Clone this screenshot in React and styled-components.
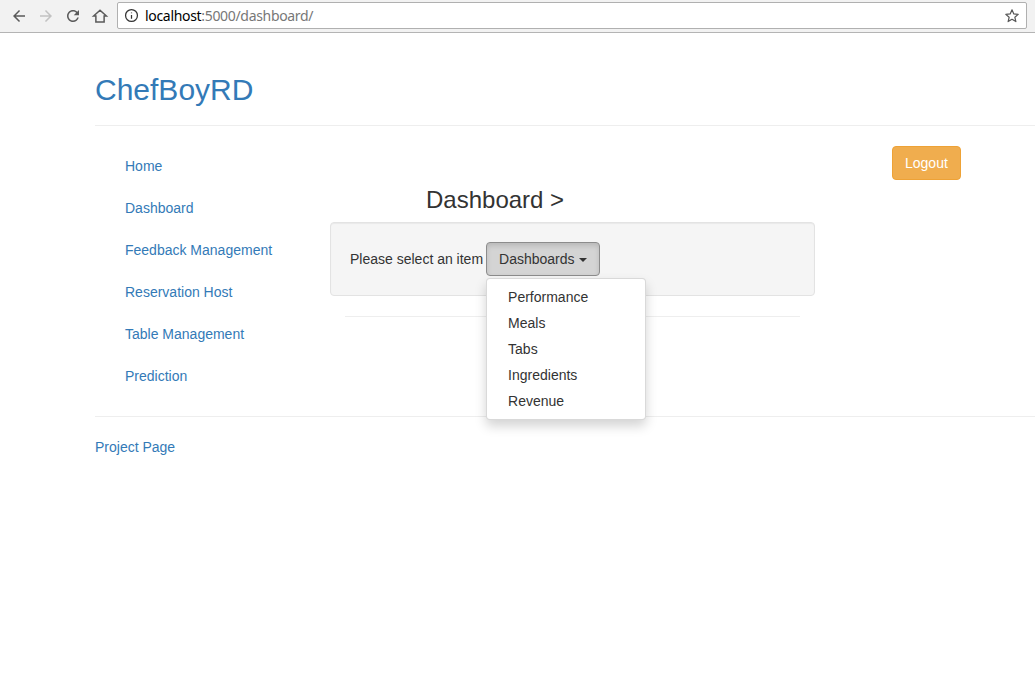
import React from 'react';
import styled, { createGlobalStyle } from 'styled-components';

const Global = createGlobalStyle`
  html, body {
    margin: 0;
    padding: 0;
    background: #fff;
  }
  body {
    font-family: "Liberation Sans", Arial, sans-serif;
    font-size: 14px;
    line-height: 20px;
    color: #333;
  }
  * { box-sizing: border-box; }
`;

/* browser chrome */
const Toolbar = styled.div`
  height: 33px;
  background: #f2f2f2;
  border-bottom: 1px solid #b4b4b4;
  display: flex;
  align-items: center;
  padding: 0 8px 1px 5px;
`;

const NavIcon = styled.span`
  width: 27px;
  height: 28px;
  display: flex;
  align-items: center;
  justify-content: center;
  color: ${p => (p.$dim ? '#c2c2c2' : '#5a5a5a')};
`;

const Omnibox = styled.div`
  flex: 1;
  height: 27px;
  margin-left: 4px;
  background: #fff;
  border: 1px solid #b0b0b0;
  border-radius: 2px;
  display: flex;
  align-items: center;
  padding: 0 6px;
  font-family: "Noto Sans", "DejaVu Sans", sans-serif;
  font-size: 14px;
`;

const Url = styled.span`
  flex: 1;
  margin-left: 6px;
  color: #000;
  letter-spacing: -0.32px;
  span { color: #777; }
`;

/* page */
const Page = styled.div`
  padding-left: 95px;
`;

const Brand = styled.h2`
  margin: 40px 0 0;
  padding-bottom: 19px;
  font-size: 30px;
  line-height: 33px;
  font-weight: 400;
  color: #337ab7;
  border-bottom: 1px solid #eee;
`;

const Row = styled.div`
  display: flex;
  align-items: flex-start;
  padding-top: 19px;
  padding-bottom: 19px;
  border-bottom: 1px solid #eee;
`;

const Sidebar = styled.ul`
  list-style: none;
  margin: 0;
  padding: 0 0 0 30px;
  width: 235px;
  a {
    display: block;
    padding: 11px 0;
    color: #337ab7;
    text-decoration: none;
  }
`;

const Content = styled.div`
  width: 485px;
`;

const Title = styled.h3`
  margin: 42px 0 9px 96px;
  font-size: 24px;
  line-height: 26px;
  font-weight: 400;
`;

const Well = styled.div`
  background: #f5f5f5;
  border: 1px solid #e3e3e3;
  border-radius: 4px;
  padding: 19px;
  box-shadow: inset 0 1px 1px rgba(0, 0, 0, 0.05);
  display: flex;
  align-items: center;
`;

const Dropdown = styled.div`
  position: relative;
  margin-left: 3px;
`;

const Button = styled.button`
  font-family: inherit;
  font-size: 14px;
  line-height: 20px;
  padding: 6px 12px;
  border-radius: 4px;
  border: 1px solid ${p => (p.$warning ? '#eea236' : '#8c8c8c')};
  background: ${p => (p.$warning ? '#f0ad4e' : '#d4d4d4')};
  color: ${p => (p.$warning ? '#fff' : '#333')};
  box-shadow: ${p => (p.$warning ? 'none' : 'inset 0 3px 5px rgba(0,0,0,.125)')};
  display: flex;
  align-items: center;
`;

const Caret = styled.span`
  width: 0;
  height: 0;
  margin-left: 4px;
  margin-top: 1px;
  border-top: 4px solid #333;
  border-left: 4px solid transparent;
  border-right: 4px solid transparent;
`;

const Menu = styled.ul`
  position: absolute;
  top: 100%;
  left: 0;
  margin: 2px 0 0;
  padding: 5px 0;
  min-width: 160px;
  list-style: none;
  background: #fff;
  border: 1px solid rgba(0, 0, 0, 0.15);
  border-radius: 4px;
  box-shadow: 0 6px 12px rgba(0, 0, 0, 0.175);
  z-index: 10;
  li {
    padding: 3px 20px 3px 21px;
    line-height: 20px;
    color: #333;
    white-space: nowrap;
  }
`;

const Divider = styled.div`
  margin: 20px 15px 0;
  border-top: 1px solid #eee;
`;

const Aside = styled.div`
  padding: 1px 0 0 77px;
`;

const Footer = styled.div`
  padding-top: 20px;
  a {
    color: #337ab7;
    text-decoration: none;
  }
`;

const links = ['Home', 'Dashboard', 'Feedback Management', 'Reservation Host', 'Table Management', 'Prediction'];
const items = ['Performance', 'Meals', 'Tabs', 'Ingredients', 'Revenue'];

export default function App() {
  return (
    <>
      <Global />
      <Toolbar>
        <NavIcon>
          <svg width="18" height="18" viewBox="0 0 24 24" fill="currentColor">
            <path d="M20 11H7.83l5.59-5.59L12 4l-8 8 8 8 1.41-1.41L7.83 13H20v-2z" />
          </svg>
        </NavIcon>
        <NavIcon $dim>
          <svg width="18" height="18" viewBox="0 0 24 24" fill="currentColor">
            <path d="M12 4l-1.41 1.41L16.17 11H4v2h12.17l-5.58 5.59L12 20l8-8z" />
          </svg>
        </NavIcon>
        <NavIcon>
          <svg width="18" height="18" viewBox="0 0 24 24" fill="currentColor">
            <path d="M17.65 6.35C16.2 4.9 14.21 4 12 4c-4.42 0-7.99 3.58-7.99 8s3.57 8 7.990 8c3.73 0 6.84-2.55 7.73-6h-2.08c-.82 2.33-3.04 4-5.65 4-3.31 0-6-2.69-6-6s2.69-6 6-6c1.66 0 3.14.69 4.22 1.78L13 11h7V4l-2.35 2.35z" />
          </svg>
        </NavIcon>
        <NavIcon>
          <svg width="18" height="18" viewBox="0 0 24 24" fill="none" stroke="currentColor" strokeWidth="2">
            <path d="M12 4.3L3.5 12H6.5V20H17.5V12H20.5Z" />
          </svg>
        </NavIcon>
        <Omnibox>
          <svg width="15" height="15" viewBox="0 0 24 24" fill="none" stroke="#333" strokeWidth="2">
            <circle cx="12" cy="12" r="9.5" />
            <path d="M12 11v6M12 7v1.5" />
          </svg>
          <Url>
            localhost<span>:5000/dashboard/</span>
          </Url>
          <svg width="16" height="16" viewBox="0 0 24 24" fill="none" stroke="#555" strokeWidth="1.8" strokeLinejoin="round">
            <path d="M12 2.8l2.7 6.1 6.6.6-5 4.4 1.5 6.5L12 17l-5.8 3.4 1.5-6.5-5-4.4 6.6-.6z" />
          </svg>
        </Omnibox>
      </Toolbar>
      <Page>
        <Brand>ChefBoyRD</Brand>
        <Row>
          <Sidebar>
            {links.map(l => (
              <li key={l}>
                <a href="#">{l}</a>
              </li>
            ))}
          </Sidebar>
          <Content>
            <Title>Dashboard &gt;</Title>
            <Well>
              Please select an item
              <Dropdown>
                <Button>
                  Dashboards
                  <Caret />
                </Button>
                <Menu>
                  {items.map(i => (
                    <li key={i}>{i}</li>
                  ))}
                </Menu>
              </Dropdown>
            </Well>
            <Divider />
          </Content>
          <Aside>
            <Button $warning>Logout</Button>
          </Aside>
        </Row>
        <Footer>
          <a href="#">Project Page</a>
        </Footer>
      </Page>
    </>
  );
}
